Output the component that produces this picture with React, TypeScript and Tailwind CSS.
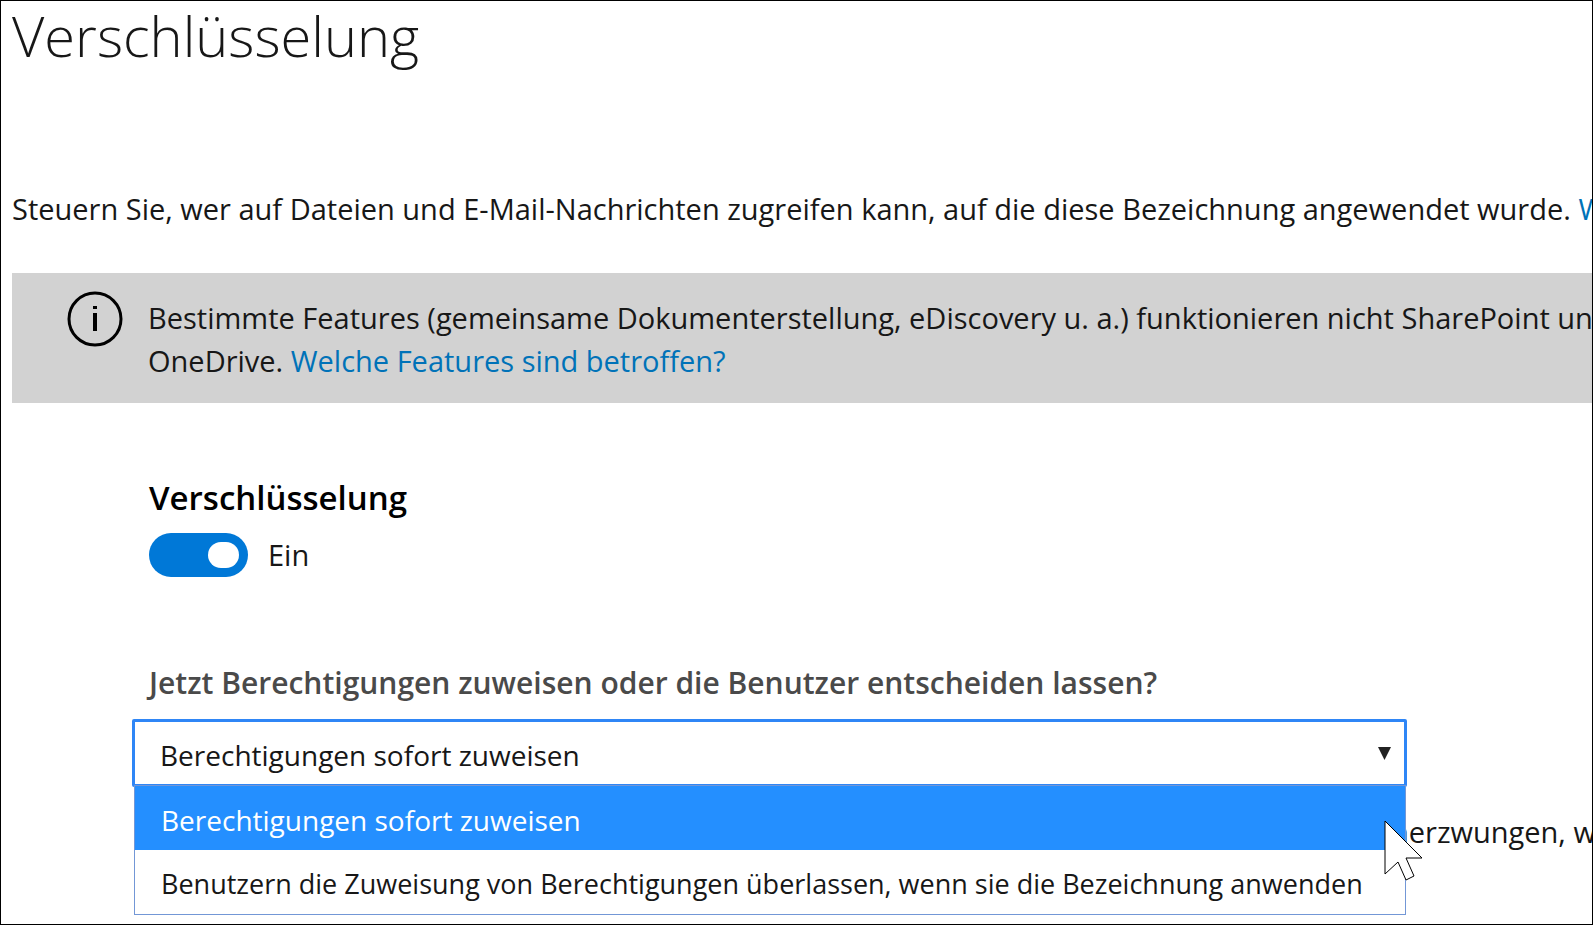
import { useState } from "react";

const options = [
  "Berechtigungen sofort zuweisen",
  "Benutzern die Zuweisung von Berechtigungen überlassen, wenn sie die Bezeichnung anwenden",
];

function InfoIcon() {
  return (
    <svg className="size-14 shrink-0" viewBox="0 0 56 56" fill="none" aria-hidden="true">
      <circle cx="28" cy="28" r="26" stroke="#000" strokeWidth="3" />
      <rect x="26" y="15" width="4" height="3" fill="#000" />
      <rect x="26" y="22" width="4" height="18" fill="#000" />
    </svg>
  );
}

function Pointer() {
  return (
    <svg
      className="pointer-events-none absolute -right-[18px] top-[35px] h-[62px] w-10"
      viewBox="0 0 40 62"
      aria-hidden="true"
    >
      <path d="M1 1V54L14 42L22 60L30 56L22 38H38Z" fill="#fff" stroke="#000" strokeWidth="1" />
    </svg>
  );
}

function Banner() {
  return (
    <section className="flex items-start gap-[25px] bg-[#d2d2d2] pt-[18px] pb-[21px] pl-[55px]">
      <InfoIcon />
      <p className="pt-[5px] text-[29px] leading-[43px] whitespace-nowrap">
        Bestimmte Features (gemeinsame Dokumenterstellung, eDiscovery u. a.) funktionieren nicht SharePoint und
        <br />
        OneDrive.{" "}
        <a href="#features" className="text-[#0072b8]">
          Welche Features sind betroffen?
        </a>
      </p>
    </section>
  );
}

function Toggle() {
  const [on, setOn] = useState(true);
  return (
    <label className="mt-[13px] flex w-fit items-center gap-5">
      <input
        type="checkbox"
        role="switch"
        checked={on}
        onChange={(e) => setOn(e.target.checked)}
        className="peer sr-only"
      />
      <span className="flex h-11 w-[99px] items-center rounded-full bg-[#666] px-[9px] peer-checked:justify-end peer-checked:bg-[#0078d7]">
        <span className="h-[26px] w-[31px] rounded-full bg-white" />
      </span>
      <span className="text-[29px] leading-[44px]">{on ? "Ein" : "Aus"}</span>
    </label>
  );
}

function PermissionPicker() {
  const [value, setValue] = useState(0);
  return (
    <div className="relative -ml-[17px] w-full max-w-[1275px]">
      <div className="relative">
        <select
          id="permissions"
          value={value}
          onChange={(e) => setValue(Number(e.target.value))}
          className="block h-[68px] w-full appearance-none rounded-xs border-3 border-[#2f86f6] bg-white pt-[3px] pl-[25px] text-[28px] outline-none"
        >
          {options.map((o, i) => (
            <option key={o} value={i}>
              {o}
            </option>
          ))}
        </select>
        <svg
          className="pointer-events-none absolute top-7 right-4 h-[13px] w-[13px]"
          viewBox="0 0 13 13"
          aria-hidden="true"
        >
          <path d="M0 0H13L6.500 13Z" fill="#222" />
        </svg>
      </div>
      <div className="absolute top-[66px] right-px left-[2px] z-10">
        <ul role="listbox" aria-label="Berechtigungen" className="border border-[#7397d6] bg-white">
          {options.map((o, i) => (
            <li
              key={o}
              role="option"
              aria-selected={i === value}
              onClick={() => setValue(i)}
              className="h-16 pl-[26px] text-[27px] leading-[68px] whitespace-nowrap aria-selected:bg-[#248fff] aria-selected:text-[28px] aria-selected:text-white"
            >
              {o}
            </li>
          ))}
        </ul>
        <Pointer />
      </div>
    </div>
  );
}

export default function App() {
  return (
    <main className="h-screen overflow-hidden border border-black bg-white pl-[11px] font-['Open_Sans','Noto_Sans',sans-serif] text-[#171717]">
      <h1 className="text-[56px] leading-[68px] font-light">Verschlüsselung</h1>
      <p className="mt-[118px] mb-[42px] text-[29px] leading-[44px] whitespace-nowrap">
        Steuern Sie, wer auf Dateien und E-Mail-Nachrichten zugreifen kann, auf die diese Bezeichnung angewendet wurde.{" "}
        <a href="#more" className="text-[#0072b8]">
          Weitere Informationen
        </a>
      </p>
      <Banner />
      <div className="pt-[73px] pl-[137px]">
        <h2 className="text-[33px] leading-[44px] font-semibold text-black">Verschlüsselung</h2>
        <Toggle />
        <label
          htmlFor="permissions"
          className="mt-[84px] mb-[14px] block text-[30px] leading-[44px] font-semibold text-[#4a4a4a]"
        >
          Jetzt Berechtigungen zuweisen oder die Benutzer entscheiden lassen?
        </label>
        <PermissionPicker />
        <p className="pt-[23px] pl-[1242px] text-[29px] leading-[44px] whitespace-nowrap">nerzwungen, wenn</p>
      </div>
    </main>
  );
}
